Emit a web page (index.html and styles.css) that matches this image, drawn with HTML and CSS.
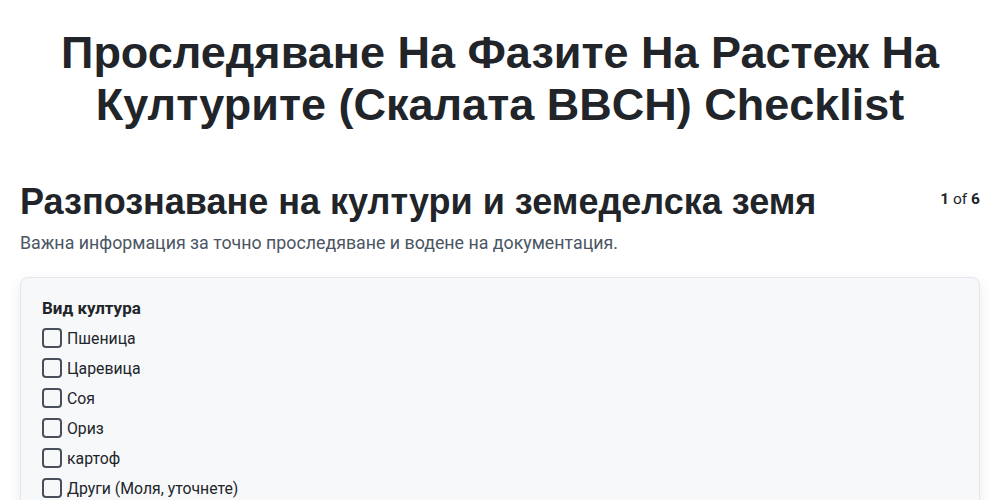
FILE: index.html
```html
<!DOCTYPE html>
<html lang="bg">
<head>
<meta charset="utf-8">
<title>Checklist</title>
<link rel="stylesheet" href="styles.css">
</head>
<body>
<h1 class="page-title">Проследяване На Фазите На Растеж На Културите (Скалата BBCH) Checklist</h1>
<section class="section">
  <div class="section-head">
    <h2 class="section-title">Разпознаване на култури и земеделска земя</h2>
    <div class="pager"><b>1</b> of <b>6</b></div>
  </div>
  <p class="section-desc">Важна информация за точно проследяване и водене на документация.</p>
  <div class="card">
    <div class="field-label">Вид култура</div>
    <label class="check"><span class="box"></span><span>Пшеница</span></label>
    <label class="check"><span class="box"></span><span>Царевица</span></label>
    <label class="check"><span class="box"></span><span>Соя</span></label>
    <label class="check"><span class="box"></span><span>Ориз</span></label>
    <label class="check"><span class="box"></span><span>картоф</span></label>
    <label class="check"><span class="box"></span><span>Други (Моля, уточнете)</span></label>
  </div>
</section>
</body>
</html>
```
FILE: styles.css
```css
html, body {
  margin: 0;
  padding: 0;
  background: #ffffff;
}
body {
  font-family: Roboto, "Liberation Sans", sans-serif;
  color: #212529;
  padding: 27px 20px 0;
}
.page-title {
  font-family: "Liberation Sans", Arial, sans-serif;
  font-weight: 700;
  font-size: 45px;
  line-height: 52px;
  text-align: center;
  margin: 0 30px 49px;
  color: #212529;
}
.section-head {
  display: flex;
  justify-content: space-between;
  align-items: flex-start;
}
.section-title {
  font-family: "Liberation Sans", Arial, sans-serif;
  font-weight: 700;
  font-size: 36px;
  line-height: 1.2;
  margin: 0;
  color: #212529;
}
.pager {
  font-size: 15.5px;
  line-height: 24px;
  margin-top: 7px;
  color: #212529;
}
.section-desc {
  margin: 6px 0 21px;
  font-size: 17.8px;
  line-height: 27px;
  color: #4b5563;
}
.card {
  background: #f7f8fa;
  border: 1px solid #e4e6ec;
  border-radius: 8px;
  box-shadow: 0 4px 14px rgba(0, 0, 0, 0.08);
  padding: 18px 21px 20px;
  min-height: 300px;
}
.field-label {
  font-weight: 700;
  font-size: 17px;
  line-height: 24px;
  margin-bottom: 3px;
  color: #212529;
}
.check {
  display: flex;
  align-items: center;
  gap: 5px;
  height: 30px;
  font-size: 15.8px;
  color: #212529;
}
.box {
  width: 20px;
  height: 20px;
  box-sizing: border-box;
  border: 2px solid #4a4f5c;
  border-radius: 4px;
  background: transparent;
  flex: none;
}
```
